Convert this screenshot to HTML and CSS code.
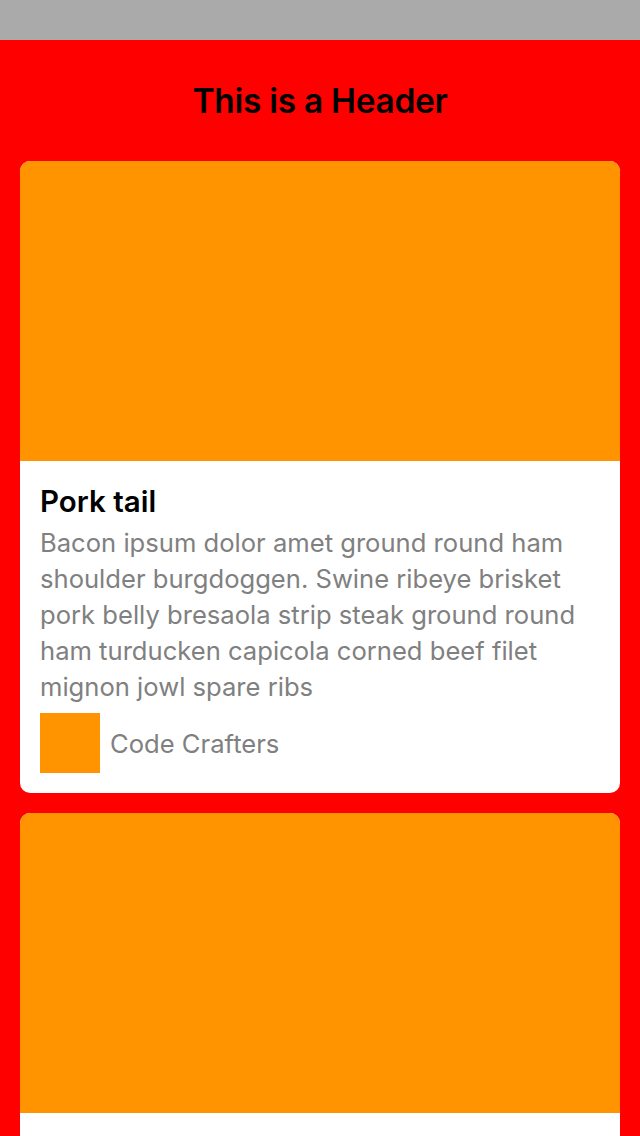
FILE: index.html
```html
<!DOCTYPE html>
<html>
<head>
<meta charset="utf-8">
<link rel="stylesheet" href="styles.css">
</head>
<body>
<div class="status"></div>
<div class="page">
  <header class="header"><h1 class="header-title">This is a Header</h1></header>
  <div class="list">
    <div class="card">
      <div class="card-image"></div>
      <div class="card-body">
        <h2 class="card-title">Pork tail</h2>
        <p class="card-text">Bacon ipsum dolor amet ground round ham shoulder burgdoggen. Swine ribeye brisket pork belly bresaola strip steak ground round ham turducken capicola corned beef filet mignon jowl spare ribs</p>
        <div class="card-footer">
          <div class="avatar"></div>
          <span class="author">Code Crafters</span>
        </div>
      </div>
    </div>
    <div class="card">
      <div class="card-image"></div>
      <div class="card-body">
        <h2 class="card-title">Pork tail</h2>
        <p class="card-text">Bacon ipsum dolor amet ground round ham shoulder burgdoggen. Swine ribeye brisket pork belly bresaola strip steak ground round ham turducken capicola corned beef filet mignon jowl spare ribs</p>
        <div class="card-footer">
          <div class="avatar"></div>
          <span class="author">Code Crafters</span>
        </div>
      </div>
    </div>
  </div>
</div>
</body>
</html>
```
FILE: styles.css
```css
html, body {
  margin: 0;
  padding: 0;
  height: 100%;
  overflow: hidden;
}
body {
  background: #ff0000;
  font-family: Inter, "Noto Sans", sans-serif;
}
.status {
  height: 40px;
  background: #aaaaaa;
}
.page {
  background: #ff0000;
}
.header {
  height: 121px;
  display: flex;
  align-items: center;
  justify-content: center;
}
.header-title {
  margin: 0;
  font-size: 33.5px;
  font-weight: 600;
  color: #000;
  letter-spacing: -0.3px;
}
.list {
  display: flex;
  flex-direction: column;
  gap: 20px;
  padding: 0 20px 20px;
}
.card {
  background: #fff;
  border-radius: 10px;
  overflow: hidden;
}
.card-image {
  height: 300px;
  background: #ff9300;
}
.card-body {
  padding: 20px 20px 20px;
}
.card-title {
  margin: 0 0 4px;
  font-size: 29.5px;
  line-height: 40px;
  font-weight: 600;
  color: #000;
}
.card-text {
  margin: 0;
  font-size: 25.6px;
  line-height: 36px;
  color: #808080;
}
.card-footer {
  margin-top: 8px;
  display: flex;
  align-items: center;
  gap: 10px;
}
.avatar {
  width: 60px;
  height: 60px;
  background: #ff9300;
}
.author {
  font-size: 25.6px;
  color: #808080;
}
```
